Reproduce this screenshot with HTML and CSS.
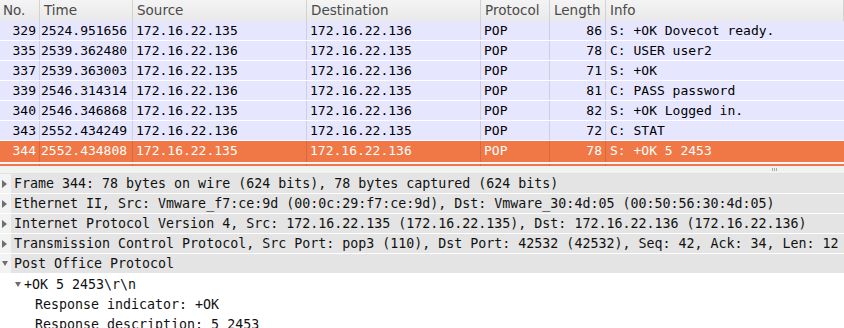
FILE: index.html
```html
<!DOCTYPE html>
<html lang="en">
<head>
    <meta charset="UTF-8">
    <title>Packet list</title>
    <link rel="stylesheet" href="styles.css">
</head>
<body>
    <section class="packet-list">
        <div class="list-head">
            <div class="col">No.</div>
            <div class="col">Time</div>
            <div class="col">Source</div>
            <div class="col">Destination</div>
            <div class="col">Protocol</div>
            <div class="col">Length</div>
            <div class="col">Info</div>
        </div>
        <div class="row">
            <div class="cell num">329</div><div class="cell time">2524.951656</div><div class="cell">172.16.22.135</div><div class="cell">172.16.22.136</div><div class="cell">POP</div><div class="cell num">86</div><div class="cell info">S: +OK Dovecot ready.</div>
        </div>
        <div class="row">
            <div class="cell num">335</div><div class="cell time">2539.362480</div><div class="cell">172.16.22.136</div><div class="cell">172.16.22.135</div><div class="cell">POP</div><div class="cell num">78</div><div class="cell info">C: USER user2</div>
        </div>
        <div class="row">
            <div class="cell num">337</div><div class="cell time">2539.363003</div><div class="cell">172.16.22.135</div><div class="cell">172.16.22.136</div><div class="cell">POP</div><div class="cell num">71</div><div class="cell info">S: +OK</div>
        </div>
        <div class="row">
            <div class="cell num">339</div><div class="cell time">2546.314314</div><div class="cell">172.16.22.136</div><div class="cell">172.16.22.135</div><div class="cell">POP</div><div class="cell num">81</div><div class="cell info">C: PASS password</div>
        </div>
        <div class="row">
            <div class="cell num">340</div><div class="cell time">2546.346868</div><div class="cell">172.16.22.135</div><div class="cell">172.16.22.136</div><div class="cell">POP</div><div class="cell num">82</div><div class="cell info">S: +OK Logged in.</div>
        </div>
        <div class="row">
            <div class="cell num">343</div><div class="cell time">2552.434249</div><div class="cell">172.16.22.136</div><div class="cell">172.16.22.135</div><div class="cell">POP</div><div class="cell num">72</div><div class="cell info">C: STAT</div>
        </div>
        <div class="row selected">
            <div class="cell num">344</div><div class="cell time">2552.434808</div><div class="cell">172.16.22.135</div><div class="cell">172.16.22.136</div><div class="cell">POP</div><div class="cell num">78</div><div class="cell info">S: +OK 5 2453</div>
        </div>
        <div class="row stub">
            <div class="cell"></div><div class="cell"></div><div class="cell"></div><div class="cell"></div><div class="cell"></div><div class="cell"></div><div class="cell"></div>
        </div>
    </section>

    <div class="splitter"><span class="grip"></span></div>

    <section class="details">
        <div class="node top"><span class="twisty closed"></span><span class="label">Frame 344: 78 bytes on wire (624 bits), 78 bytes captured (624 bits)</span></div>
        <div class="node top"><span class="twisty closed"></span><span class="label">Ethernet II, Src: Vmware_f7:ce:9d (00:0c:29:f7:ce:9d), Dst: Vmware_30:4d:05 (00:50:56:30:4d:05)</span></div>
        <div class="node top"><span class="twisty closed"></span><span class="label">Internet Protocol Version 4, Src: 172.16.22.135 (172.16.22.135), Dst: 172.16.22.136 (172.16.22.136)</span></div>
        <div class="node top"><span class="twisty closed"></span><span class="label">Transmission Control Protocol, Src Port: pop3 (110), Dst Port: 42532 (42532), Seq: 42, Ack: 34, Len: 12</span></div>
        <div class="node top"><span class="twisty open"></span><span class="label">Post Office Protocol</span></div>
        <div class="node level1"><span class="twisty open"></span><span class="label">+OK 5 2453\r\n</span></div>
        <div class="node level2"><span class="label">Response indicator: +OK</span></div>
        <div class="node level2"><span class="label">Response description: 5 2453</span></div>
    </section>
</body>
</html>
```

FILE: styles.css
```css
body {
    margin: 0;
    padding: 0;
    background: #ffffff;
    color: #000000;
    overflow: hidden;
}
.packet-list {
    font-family: 'DejaVu Sans Mono', monospace;
    font-size: 13px;
}
.list-head,
.row {
    display: grid;
    grid-template-columns: 40px 93px 174px 174px 69px 56px 1fr;
}
.list-head {
    height: 21px;
    background: linear-gradient(#f4f4f4, #e9e9e9);
    font-family: 'DejaVu Sans', sans-serif;
    font-size: 13.5px;
    color: #4a4a4a;
}
.list-head .col {
    box-sizing: border-box;
    border-right: 1px solid #d2d2d2;
    padding-left: 4px;
    line-height: 21px;
    white-space: nowrap;
    overflow: hidden;
}
.list-head .col:first-child {
    padding-left: 3px;
}
.row {
    height: 20px;
    box-sizing: border-box;
    background: #e7e6ff;
    border-bottom: 1px solid #ffffff;
}
.cell {
    box-sizing: border-box;
    border-right: 1px solid #cfcfe2;
    padding: 0 3px;
    line-height: 19px;
    white-space: nowrap;
    overflow: hidden;
}
.cell:last-child {
    border-right: none;
}
.cell.num {
    text-align: right;
}
.cell.time {
    padding-left: 1px;
}
.cell.info {
    padding-left: 4px;
}
.row.selected {
    background: #f07746;
    color: #ffffff;
    border-bottom: 2px solid #f6f4fb;
    box-sizing: content-box;
    height: 21px;
}
.row.selected .cell {
    border-right-color: #d8683d;
    line-height: 20px;
}
.row.stub {
    height: 2px;
    background: #f07746;
    border-bottom: none;
}
.row.stub .cell {
    border-right-color: #d8683d;
}
.splitter {
    height: 7px;
    background: #f2f2f1;
    border-bottom: 1px solid #e2e2e2;
    display: flex;
    justify-content: flex-end;
    align-items: center;
    padding-right: 66px;
}
.grip {
    width: 6px;
    height: 3px;
    background: repeating-linear-gradient(90deg, #a9a9a9 0 1px, transparent 1px 2px);
}
.details {
    font-family: 'DejaVu Sans Mono', monospace;
    font-size: 13.3px;
    color: #111111;
}
.node {
    display: flex;
    align-items: center;
    height: 20px;
    box-sizing: border-box;
    white-space: nowrap;
}
.node.top {
    background: linear-gradient(90deg, #f3f3f3 11px, #e4e4e4 11px);
    border-bottom: 1px solid #ffffff;
}
.node.top .label {
    padding-left: 3px;
}
.node.level1 {
    padding-left: 13px;
}
.node.level2 {
    padding-left: 35px;
}
.twisty {
    width: 11px;
    height: 100%;
    display: flex;
    align-items: center;
    flex-shrink: 0;
}
.twisty.closed::before {
    content: '';
    margin-left: 2px;
    border-left: 5px solid #6e6e6e;
    border-top: 4px solid transparent;
    border-bottom: 4px solid transparent;
}
.twisty.open::before {
    content: '';
    margin-left: 2px;
    border-top: 5px solid #6e6e6e;
    border-left: 3px solid transparent;
    border-right: 3px solid transparent;
}
.label {
    line-height: 19px;
}
```
